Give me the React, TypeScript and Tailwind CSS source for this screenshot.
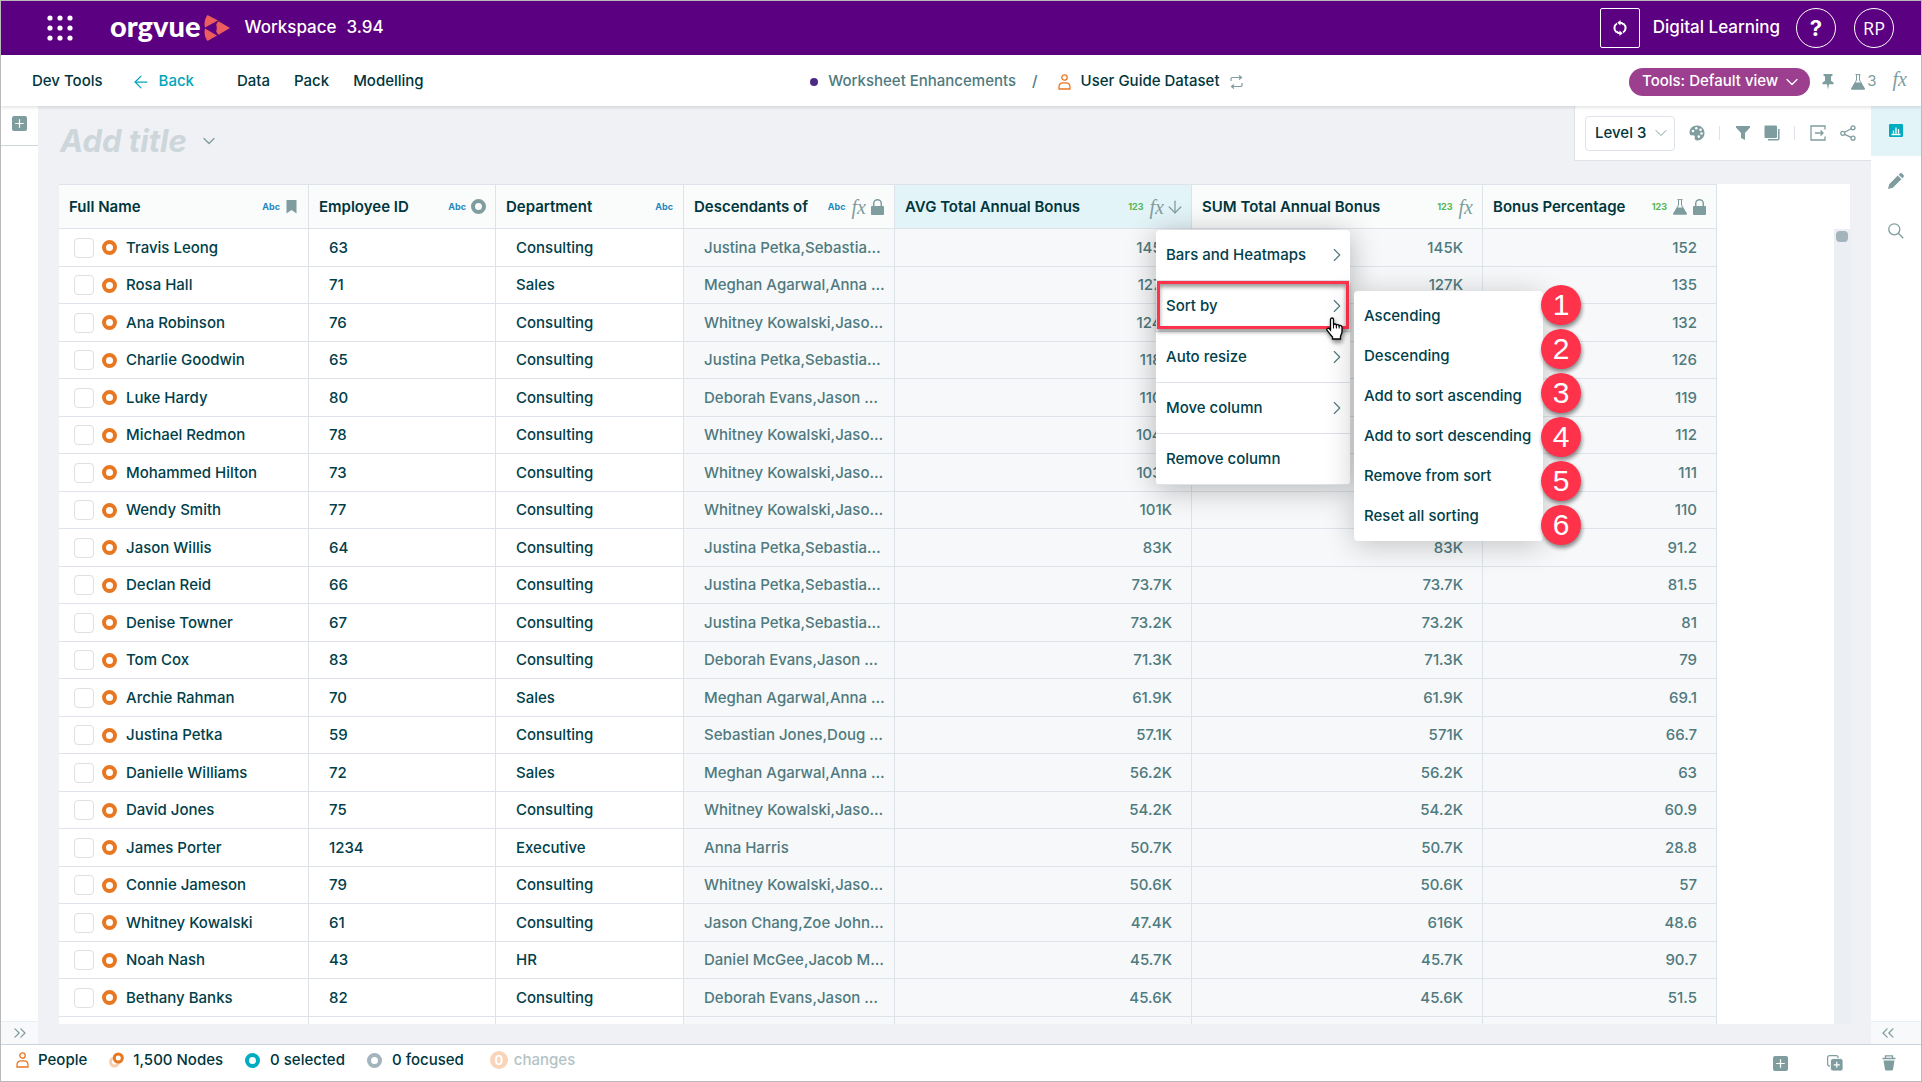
import type { ReactNode } from 'react';
import clsx from 'clsx';
import { ArrowDown, ArrowLeft, ChevronDown, ChevronRight, ChevronsLeft, ChevronsRight } from 'lucide-react';

interface Person {
  name: string;
  id: string;
  department: string;
  descendants: string;
  avg: string;
  sum: string;
  bonus: string;
}

const JUSTINA = 'Justina Petka,Sebastia…';
const MEGHAN = 'Meghan Agarwal,Anna …';
const WHITNEY = 'Whitney Kowalski,Jaso…';
const DEBORAH = 'Deborah Evans,Jason …';

const PEOPLE: Person[] = [
  { name: 'Travis Leong', id: '63', department: 'Consulting', descendants: JUSTINA, avg: '145K', sum: '145K', bonus: '152' },
  { name: 'Rosa Hall', id: '71', department: 'Sales', descendants: MEGHAN, avg: '127K', sum: '127K', bonus: '135' },
  { name: 'Ana Robinson', id: '76', department: 'Consulting', descendants: WHITNEY, avg: '124K', sum: '124K', bonus: '132' },
  { name: 'Charlie Goodwin', id: '65', department: 'Consulting', descendants: JUSTINA, avg: '118K', sum: '118K', bonus: '126' },
  { name: 'Luke Hardy', id: '80', department: 'Consulting', descendants: DEBORAH, avg: '110K', sum: '110K', bonus: '119' },
  { name: 'Michael Redmon', id: '78', department: 'Consulting', descendants: WHITNEY, avg: '104K', sum: '104K', bonus: '112' },
  { name: 'Mohammed Hilton', id: '73', department: 'Consulting', descendants: WHITNEY, avg: '103K', sum: '103K', bonus: '111' },
  { name: 'Wendy Smith', id: '77', department: 'Consulting', descendants: WHITNEY, avg: '101K', sum: '101K', bonus: '110' },
  { name: 'Jason Willis', id: '64', department: 'Consulting', descendants: JUSTINA, avg: '83K', sum: '83K', bonus: '91.2' },
  { name: 'Declan Reid', id: '66', department: 'Consulting', descendants: JUSTINA, avg: '73.7K', sum: '73.7K', bonus: '81.5' },
  { name: 'Denise Towner', id: '67', department: 'Consulting', descendants: JUSTINA, avg: '73.2K', sum: '73.2K', bonus: '81' },
  { name: 'Tom Cox', id: '83', department: 'Consulting', descendants: DEBORAH, avg: '71.3K', sum: '71.3K', bonus: '79' },
  { name: 'Archie Rahman', id: '70', department: 'Sales', descendants: MEGHAN, avg: '61.9K', sum: '61.9K', bonus: '69.1' },
  { name: 'Justina Petka', id: '59', department: 'Consulting', descendants: 'Sebastian Jones,Doug …', avg: '57.1K', sum: '571K', bonus: '66.7' },
  { name: 'Danielle Williams', id: '72', department: 'Sales', descendants: MEGHAN, avg: '56.2K', sum: '56.2K', bonus: '63' },
  { name: 'David Jones', id: '75', department: 'Consulting', descendants: WHITNEY, avg: '54.2K', sum: '54.2K', bonus: '60.9' },
  { name: 'James Porter', id: '1234', department: 'Executive', descendants: 'Anna Harris', avg: '50.7K', sum: '50.7K', bonus: '28.8' },
  { name: 'Connie Jameson', id: '79', department: 'Consulting', descendants: WHITNEY, avg: '50.6K', sum: '50.6K', bonus: '57' },
  { name: 'Whitney Kowalski', id: '61', department: 'Consulting', descendants: 'Jason Chang,Zoe John…', avg: '47.4K', sum: '616K', bonus: '48.6' },
  { name: 'Noah Nash', id: '43', department: 'HR', descendants: 'Daniel McGee,Jacob M…', avg: '45.7K', sum: '45.7K', bonus: '90.7' },
  { name: 'Bethany Banks', id: '82', department: 'Consulting', descendants: DEBORAH, avg: '45.6K', sum: '45.6K', bonus: '51.5' },
];

const SORT_OPTIONS = [
  'Ascending',
  'Descending',
  'Add to sort ascending',
  'Add to sort descending',
  'Remove from sort',
  'Reset all sorting',
];

/* ---------- icons ---------- */

function Logo() {
  return (
    <a href="#" aria-label="orgvue" className="flex items-center text-white">
      <span className="pb-1 font-['Lato',sans-serif] text-[29px] leading-8 font-black">orgvue</span>
      <svg width="26" height="26" viewBox="0 0 26 26" fill="#ec5e5e" className="ml-1" aria-hidden="true">
        <path d="M3.500 0 14 5.600 1 12.400C-.2 8 .9 3.500 3.500 0Z" />
        <path d="M3.500 26 13 20.600 1 13.600c-1.100 4.600-.1 9.100 2.500 12.400Z" />
        <path d="M14.500 6.300 26 13l-11.500 6.700C12.200 17.500 11.500 15 11.500 13s.7-4.500 3-6.700Z" />
        <path d="M2.300 13 9.500 8.700h2.300c1.300 2.600 1.300 6 0 8.600H9.500Z" fill="#5b0080" />
      </svg>
    </a>
  );
}

function AppGrid() {
  return (
    <svg width="26" height="26" viewBox="0 0 26 26" fill="white" aria-hidden="true">
      {[3, 13, 23].map((y) => [3, 13, 23].map((x) => <circle key={`${x}-${y}`} cx={x} cy={y} r="2.600" />))}
    </svg>
  );
}

function SyncIcon() {
  return (
    <svg width="14" height="16" viewBox="0 0 14 16" fill="none" stroke="white" strokeWidth="2" aria-hidden="true">
      <path d="M3.300 12A5.200 5.200 0 0 1 4 3.500" />
      <path d="M10.700 4A5.200 5.200 0 0 1 10 12.500" />
      <path d="M7 2.800a5.200 5.200 0 0 1 3.700 1.700M7 13.200a5.200 5.200 0 0 1-3.700-1.700" />
      <path d="M7.500 0v5.600L4.300 2.800ZM6.500 16v-5.600l3.200 2.800Z" fill="white" stroke="none" />
    </svg>
  );
}

function PersonIcon() {
  return (
    <svg width="13" height="16" viewBox="0 0 13 16" fill="none" stroke="#e87722" strokeWidth="1.300" aria-hidden="true">
      <circle cx="6.500" cy="3.500" r="2.700" />
      <path d="M1 15v-2c0-2.600 1.700-4.200 4-4.200h3c2.300 0 4 1.600 4 4.200v2Z" />
    </svg>
  );
}

function RepeatIcon() {
  return (
    <svg width="13" height="14" viewBox="0 0 13 14" fill="none" stroke="#7f9c9e" strokeWidth="1.200" aria-hidden="true">
      <path d="M1 6V3.800C1 3 1.500 2.500 2.300 2.500H11M9 .5l2.500 2L9 4.500" />
      <path d="M12 8v2.200c0 .8-.5 1.300-1.300 1.300H2M4 9.500l-2.500 2 2.500 2" />
    </svg>
  );
}

function PinIcon() {
  return (
    <svg width="12" height="16" viewBox="0 0 12 16" fill="#7f9c9e" aria-hidden="true">
      <path d="M1.500 0h9v1.500L9 2.500v4.300l2.500 1.700v1.700H7L6 15.500 5 10.200H.5V8.500L3 6.800V2.500L1.500 1.500Z" />
    </svg>
  );
}

function FlaskIcon() {
  return (
    <svg width="14" height="16" viewBox="0 0 14 16" aria-hidden="true">
      <path d="M4.500.6h5M5.500.6V6L1 14.500M8.500.6V6L13 14.500" fill="none" stroke="#7f9c9e" />
      <path d="M4 8.500h6l3.800 5.700c.4.900 0 1.600-1 1.600H1.200c-1 0-1.400-.7-1-1.600Z" fill="#7f9c9e" />
    </svg>
  );
}

function LockIcon() {
  return (
    <svg width="13" height="16" viewBox="0 0 13 16" aria-hidden="true">
      <path d="M2.700 8V4.500a3.800 3.800 0 0 1 7.600 0V8" fill="none" stroke="#7f9c9e" strokeWidth="1.500" />
      <rect y="7" width="13" height="9" rx="1" fill="#7f9c9e" />
    </svg>
  );
}

function BookmarkIcon() {
  return (
    <svg width="11" height="14" viewBox="0 0 11 14" fill="#7f9c9e" className="mr-px" aria-hidden="true">
      <path d="M.5 0h10v13.500L5.500 10 .5 13.500Z" />
    </svg>
  );
}

function PaletteIcon() {
  return (
    <svg width="16" height="16" viewBox="0 0 16 16" aria-hidden="true">
      <path d="M8 .5C3.500.5.500 3.800.500 7.500c0 2 1.200 3.200 3 2.800 1.800-.4 2.700.7 2.200 2.300-.4 1.500.6 2.900 2.300 2.900 4.300 0 7.500-3.400 7.500-7.500S12.300.5 8 .5Z" fill="#7f9c9e" />
      <g fill="white">
        <circle cx="4" cy="6" r="1.300" />
        <circle cx="7.300" cy="3.300" r="1.300" />
        <circle cx="11.500" cy="4.700" r="1.300" />
        <circle cx="12.500" cy="8.500" r="1.300" />
        <circle cx="9.800" cy="11.600" r="1.300" />
      </g>
    </svg>
  );
}

function FilterIcon() {
  return (
    <svg width="14" height="14" viewBox="0 0 14 14" fill="#7f9c9e" aria-hidden="true">
      <path d="M0 0h14v1.500L9 7v7l-4-2V7L0 1.500Z" />
    </svg>
  );
}

function LayersIcon() {
  return (
    <svg width="16" height="16" viewBox="0 0 16 16" aria-hidden="true">
      <rect x=".5" y=".5" width="12.500" height="12.500" rx="1" fill="#7f9c9e" />
      <path d="M14.800 4v9.500c0 .8-.5 1.300-1.300 1.300H4" fill="none" stroke="#7f9c9e" strokeWidth="1.500" />
    </svg>
  );
}

function ExportIcon() {
  return (
    <svg width="16" height="16" viewBox="0 0 16 16" fill="none" stroke="#7f9c9e" strokeWidth="1.300" aria-hidden="true">
      <path d="M15 4.500V1H1v14h14v-3.500M5 8h8M10.500 5.500 13 8l-2.500 2.500" />
    </svg>
  );
}

function ShareIcon() {
  return (
    <svg width="16" height="16" viewBox="0 0 16 16" fill="none" stroke="#7f9c9e" strokeWidth="1.300" aria-hidden="true">
      <circle cx="2.800" cy="8.300" r="2" />
      <circle cx="13" cy="2.800" r="2" />
      <circle cx="13" cy="13.200" r="2" />
      <path d="m4.600 7.300 6.600-3.500M4.600 9.300l6.600 3" />
    </svg>
  );
}

function ChartIcon() {
  return (
    <svg width="14" height="14" viewBox="0 0 14 14" aria-hidden="true">
      <rect width="14" height="13" rx="1" fill="#00acbf" />
      <path d="M2.500 10.500h9M4.500 9.500V6.500M7 9.500v-6M9.500 9.500v-4.500" stroke="white" strokeWidth="1.300" />
    </svg>
  );
}

function PencilIcon() {
  return (
    <svg width="16" height="16" viewBox="0 0 16 16" fill="#7f9c9e" aria-hidden="true">
      <path d="M0 16l1.200-4.800L9.800 2.600l3.600 3.600-8.600 8.600ZM10.700 1.700 12 .5c.6-.6 1.400-.6 2 0l1.500 1.500c.6.6.6 1.400 0 2l-1.200 1.300Z" />
    </svg>
  );
}

function SearchIcon() {
  return (
    <svg width="16" height="16" viewBox="0 0 16 16" fill="none" stroke="#7f9c9e" strokeWidth="1.300" aria-hidden="true">
      <circle cx="6.300" cy="6.300" r="5.500" />
      <path d="m10.300 10.300 5 5" />
    </svg>
  );
}

function PlusBox() {
  return (
    <svg width="15" height="15" viewBox="0 0 15 15" aria-hidden="true">
      <rect width="15" height="15" rx="2" fill="#7f9c9e" />
      <path d="M7.500 3.200v8.600M3.200 7.500h8.600" stroke="white" strokeWidth="1.200" />
    </svg>
  );
}

function CopyPlus() {
  return (
    <svg width="16" height="16" viewBox="0 0 16 16" aria-hidden="true">
      <rect x=".6" y=".6" width="10.500" height="10.500" rx="2" fill="none" stroke="#7f9c9e" strokeWidth="1.200" />
      <rect x="3.500" y="3.500" width="12.500" height="12.500" rx="2.500" fill="#7f9c9e" stroke="white" strokeWidth=".8" />
      <path d="M9.800 6.800v6M6.800 9.800h6" stroke="white" strokeWidth="1.200" />
    </svg>
  );
}

function TrashIcon() {
  return (
    <svg width="14" height="16" viewBox="0 0 14 16" aria-hidden="true">
      <path d="M3.500 3V.8h7V3M.5 3.500h13" fill="none" stroke="#7f9c9e" strokeWidth="1.300" />
      <path d="M1.500 5.500h11L11 14.500c-.1.700-.5 1-1.200 1H4.200c-.7 0-1.100-.3-1.200-1Z" fill="#7f9c9e" />
    </svg>
  );
}

function NodesIcon() {
  return (
    <svg width="15" height="16" viewBox="0 0 15 16" fill="none" strokeWidth="3" aria-hidden="true">
      <circle cx="5.500" cy="10" r="4" stroke="#f8cfae" />
      <circle cx="9.300" cy="6" r="4" stroke="#e87722" fill="white" />
    </svg>
  );
}

function HandCursor() {
  return (
    <svg width="19" height="24" viewBox="0 0 19 24" className="pointer-events-none absolute top-9 right-1.5 z-10 drop-shadow-[1px_3px_2px_rgba(0,0,0,0.45)]" aria-hidden="true">
      <path
        d="M5.500 13V2.500C5.500.5 8.500.5 8.500 2.500V8c.3-1.500 2.800-1.300 2.900.3.600-1.200 2.600-.8 2.800.6.800-.9 2.700-.4 2.800 1.300v4.300c0 2-1 3.300-1.500 4.700V22H7.500v-2C6 18.500 4 16 2 13.200c-.8-1.300.9-2.600 2.200-1.600Z"
        fill="white"
        stroke="black"
        strokeWidth="1.300"
      />
      <path d="M8.500 8v3.500M11.400 8.500v3M14.200 9v2.500" stroke="black" strokeWidth="1" fill="none" />
    </svg>
  );
}

function Fx() {
  return <span className="-mr-px font-['Liberation_Serif',serif] text-[20px] leading-4 font-normal text-[#7f9c9e] italic">fx</span>;
}

function Ring({ className }: { className: string }) {
  return <span className={clsx('inline-block size-[15px] shrink-0 rounded-full border-4', className)} />;
}

const AbcTag = () => <span className="text-[9px] font-bold text-[#1f88c0]">Abc</span>;
const NumTag = () => <span className="text-[9px] font-bold text-[#55b657]">123</span>;

/* ---------- page chrome ---------- */

function TopBar() {
  return (
    <header className="flex h-[54px] shrink-0 items-center bg-[#5b0080] pr-[27px] pl-[46px] text-white">
      <button type="button" aria-label="Applications">
        <AppGrid />
      </button>
      <div className="ml-[37px] flex items-center">
        <Logo />
        <span className="ml-3.5 text-[17px] font-medium">Workspace</span>
        <span className="ml-2.5 text-[17px] font-medium">3.94</span>
      </div>
      <div className="ml-auto flex items-center">
        <button type="button" aria-label="Refresh" className="grid size-10 place-items-center rounded-xs border border-white">
          <SyncIcon />
        </button>
        <span className="ml-[13px] text-[17px] font-medium">Digital Learning</span>
        <button type="button" aria-label="Help" className="ml-4 grid size-10 place-items-center rounded-full border border-white text-[22px] font-bold">
          ?
        </button>
        <button type="button" className="ml-[18px] grid size-10 place-items-center rounded-full border border-white font-['Open_Sans',sans-serif] text-lg">
          RP
        </button>
      </div>
    </header>
  );
}

function NavBar() {
  return (
    <nav className="relative z-10 flex h-[51px] shrink-0 items-center justify-between bg-white pt-0.5 pr-[15px] pl-[31px] text-[15px] font-medium text-[#00363d] shadow-[0_1px_4px_rgba(0,0,0,0.15)]">
      <div className="flex items-center">
        <a href="#">Dev Tools</a>
        <a href="#" className="ml-7 flex items-center gap-2 text-[#00a5bd]">
          <ArrowLeft className="size-5" strokeWidth={1.5} aria-hidden="true" />
          Back
        </a>
        <a href="#" className="ml-[43px]">Data</a>
        <a href="#" className="ml-6">Pack</a>
        <a href="#" className="ml-6">Modelling</a>
      </div>
      <div className="flex items-center">
        <span className="size-2 rounded-full bg-[#4b2a85]" />
        <a href="#" className="ml-2.5 text-[#4f7a7e]">Worksheet Enhancements</a>
        <span className="mx-4 text-[#4f7a7e]">/</span>
        <span className="mr-2.5 ml-1">
          <PersonIcon />
        </span>
        <span>User Guide Dataset</span>
        <button type="button" aria-label="Switch dataset" className="ml-2.5">
          <RepeatIcon />
        </button>
      </div>
      <div className="flex items-center text-[#7f9c9e]">
        <button type="button" className="flex h-7 items-center gap-1 rounded-full bg-[#9c3f8f] pr-2 pl-[13px] text-white">
          Tools: Default view
          <ChevronDown className="size-5" strokeWidth={1.5} aria-hidden="true" />
        </button>
        <button type="button" aria-label="Pin" className="ml-3">
          <PinIcon />
        </button>
        <button type="button" className="ml-[17px] flex items-center gap-0.5 font-normal">
          <FlaskIcon />3
        </button>
        <button type="button" className="ml-4">
          <Fx />
        </button>
      </div>
    </nav>
  );
}

function LeftRail() {
  return (
    <aside className="flex w-[37px] shrink-0 flex-col bg-white">
      <div className="flex h-10 items-center justify-center border-b border-[#cfd6da] pb-1">
        <button type="button" aria-label="Add sheet">
          <PlusBox />
        </button>
      </div>
      <button type="button" aria-label="Expand left panel" className="mt-auto flex h-[23px] items-center justify-center border-t border-[#eceff2] bg-[#f8f9fb] text-[#7f9c9e]">
        <ChevronsRight className="size-5" strokeWidth={1.5} />
      </button>
    </aside>
  );
}

function RightRail() {
  return (
    <aside className="flex w-[50px] shrink-0 flex-col bg-white">
      <button type="button" aria-label="Charts" className="grid h-[50px] place-items-center bg-[#e3f4f8]">
        <ChartIcon />
      </button>
      <button type="button" aria-label="Edit" className="grid h-[50px] place-items-center">
        <PencilIcon />
      </button>
      <button type="button" aria-label="Search" className="grid h-[50px] place-items-center">
        <SearchIcon />
      </button>
      <button type="button" aria-label="Expand right panel" className="mt-auto flex h-[23px] items-center border-t border-[#eceff2] bg-[#f8f9fb] pl-[7px] text-[#7f9c9e]">
        <ChevronsLeft className="size-5" strokeWidth={1.5} />
      </button>
    </aside>
  );
}

function SheetToolbar() {
  return (
    <div className="flex h-[78px] shrink-0 items-start justify-between">
      <div className="flex h-[70px] items-center pl-[22px]">
        <input
          type="text"
          aria-label="Sheet title"
          placeholder="Add title"
          className="w-[139px] bg-transparent text-[31px] font-bold italic outline-none placeholder:text-[#cdd6da]"
        />
        <button type="button" aria-label="Sheet options">
          <ChevronDown className="size-5 text-[#7f9c9e]" strokeWidth={1.5} />
        </button>
      </div>
      <div className="flex h-[55px] items-center border-b border-l border-[#dde3e9] bg-white pr-[15px] pl-2.5">
        <div className="relative flex items-center">
          <select aria-label="Level" className="h-[35px] w-[90px] appearance-none rounded border border-[#dde3e9] bg-white pl-[9px] text-[15px] font-medium text-[#00363d]">
            <option>Level 3</option>
          </select>
          <ChevronDown className="pointer-events-none absolute right-1 size-5 text-[#7f9c9e]" strokeWidth={1.2} />
        </div>
        <button type="button" aria-label="Colours" className="ml-3.5">
          <PaletteIcon />
        </button>
        <span className="mr-4 ml-3.5 h-3.5 w-px bg-[#dde3e9]" />
        <button type="button" aria-label="Filter">
          <FilterIcon />
        </button>
        <button type="button" aria-label="Layers" className="ml-3.5">
          <LayersIcon />
        </button>
        <span className="mr-[15px] ml-3.5 h-3.5 w-px bg-[#dde3e9]" />
        <button type="button" aria-label="Export">
          <ExportIcon />
        </button>
        <button type="button" aria-label="Share" className="ml-3.5">
          <ShareIcon />
        </button>
      </div>
    </div>
  );
}

/* ---------- menus ---------- */

function MenuItem({ label, submenu = true }: { label: string; submenu?: boolean }) {
  return (
    <button type="button" role="menuitem" className="flex h-[51px] w-full items-center justify-between border-b border-[#dde3e9] pr-0.5 pl-2.5 last:border-b-0">
      {label}
      {submenu && <ChevronRight className="size-[22px] text-[#4f7a7e]" strokeWidth={1.2} aria-hidden="true" />}
    </button>
  );
}

function SortMenu() {
  return (
    <div role="menu" className="absolute top-[61px] left-[198px] w-[189px] rounded bg-white py-[5px] shadow-[0_4px_30px_rgba(0,0,0,0.22)]">
      {SORT_OPTIONS.map((label) => (
        <button key={label} type="button" role="menuitem" className="flex h-10 w-full items-center pl-2.5 whitespace-nowrap">
          {label}
        </button>
      ))}
      <ol className="absolute -top-1.5 left-[187px] flex flex-col gap-1">
        {SORT_OPTIONS.map((label, i) => (
          <li
            key={label}
            className="grid size-10 place-items-center rounded-full bg-[#ff324b] font-['Liberation_Sans',sans-serif] text-[30px] leading-10 font-normal text-white shadow-[1px_3px_4px_rgba(0,0,0,0.45)]"
          >
            {i + 1}
          </li>
        ))}
      </ol>
    </div>
  );
}

function ColumnMenu() {
  return (
    <div role="menu" className="absolute top-[45px] left-[261px] z-20 w-[194px] rounded bg-white text-[15px] font-medium text-[#00404a] shadow-[0_4px_30px_rgba(0,0,0,0.28)]">
      <MenuItem label="Bars and Heatmaps" />
      <div className="relative">
        <MenuItem label="Sort by" />
        <span className="pointer-events-none absolute inset-x-px top-0 bottom-[3px] border-3 border-[#ff324b] shadow-[0_3px_4px_rgba(0,0,0,0.4),inset_0_3px_4px_rgba(0,0,0,0.4)]" />
        <HandCursor />
      </div>
      <MenuItem label="Auto resize" />
      <MenuItem label="Move column" />
      <MenuItem label="Remove column" submenu={false} />
      <SortMenu />
    </div>
  );
}

/* ---------- grid ---------- */

interface HeaderCellProps {
  title: string;
  icons: ReactNode;
  active?: boolean;
  children?: ReactNode;
}

function HeaderCell({ title, icons, active, children }: HeaderCellProps) {
  return (
    <th
      scope="col"
      className={clsx(
        'relative h-[45px] border-y border-r border-[#dde3e9] p-0 text-left font-semibold text-[#00363d]',
        active ? 'bg-[#e3f4f8]' : 'bg-[#fafcfb]',
      )}
    >
      <div className="flex items-center justify-between px-2.5">
        <span>{title}</span>
        <span className="flex items-center gap-1.5">{icons}</span>
      </div>
      {children}
    </th>
  );
}

function Cell({ computed, numeric, children }: { computed?: boolean; numeric?: boolean; children?: ReactNode }) {
  return (
    <td
      className={clsx(
        'border-r border-b border-[#dde3e9] py-0 pr-[19px] pl-5 whitespace-nowrap',
        computed ? 'bg-[#f6f8fa] text-[#4f7a7e]' : 'text-[#00404a]',
        numeric && 'text-right',
      )}
    >
      {children}
    </td>
  );
}

function PersonRow({ person }: { person: Person }) {
  return (
    <tr className="h-[37px] odd:h-[38px]">
      <td className="border-r border-b border-[#dde3e9] p-0 pl-[15px] text-[#00404a]">
        <label className="flex items-center">
          <input type="checkbox" className="size-5 appearance-none rounded border border-[#dde0e4] bg-white" />
          <Ring className="mr-[9px] ml-2 border-[#e87722]" />
          {person.name}
        </label>
      </td>
      <Cell>{person.id}</Cell>
      <Cell>{person.department}</Cell>
      <Cell computed>{person.descendants}</Cell>
      <Cell computed numeric>{person.avg}</Cell>
      <Cell computed numeric>{person.sum}</Cell>
      <Cell computed numeric>{person.bonus}</Cell>
    </tr>
  );
}

function DataGrid() {
  return (
    <div className="mr-[21px] mb-5 ml-[21px] flex min-h-0 flex-1 justify-between overflow-hidden bg-white">
      <table className="w-[1658px] shrink-0 table-fixed border-separate border-spacing-0 self-start text-[15px] leading-5 font-medium">
        <colgroup>
          <col className="w-[250px]" />
          <col className="w-[187px]" />
          <col className="w-[188px]" />
          <col className="w-[211px]" />
          <col className="w-[297px]" />
          <col className="w-[291px]" />
          <col className="w-[234px]" />
        </colgroup>
        <thead>
          <tr>
            <HeaderCell title="Full Name" icons={<><AbcTag /><BookmarkIcon /></>} />
            <HeaderCell title="Employee ID" icons={<><AbcTag /><Ring className="-mx-px border-[#7f9c9e]" /></>} />
            <HeaderCell title="Department" icons={<AbcTag />} />
            <HeaderCell title="Descendants of" icons={<><AbcTag /><Fx /><LockIcon /></>} />
            <HeaderCell
              title="AVG Total Annual Bonus"
              active
              icons={<><NumTag /><Fx /><ArrowDown className="-mr-1 -ml-1 size-5 text-[#7f9c9e]" strokeWidth={1.5} /></>}
            >
              <ColumnMenu />
            </HeaderCell>
            <HeaderCell title="SUM Total Annual Bonus" icons={<><NumTag /><Fx /></>} />
            <HeaderCell title="Bonus Percentage" icons={<><NumTag /><FlaskIcon /><LockIcon /></>} />
          </tr>
        </thead>
        <tbody>
          {PEOPLE.map((person) => (
            <PersonRow key={person.name} person={person} />
          ))}
          <tr className="h-[37px]">
            <Cell />
            <Cell />
            <Cell />
            <Cell computed />
            <Cell computed />
            <Cell computed />
            <Cell computed />
          </tr>
        </tbody>
      </table>
      <div className="mt-[45px] w-4 shrink-0 bg-[#ebeef2] px-0.5 pt-0.5">
        <div className="h-[11px] rounded bg-[#a3b4bd]" />
      </div>
    </div>
  );
}

function StatusBar() {
  return (
    <footer className="flex h-[37px] shrink-0 items-center justify-between border-t border-[#cbd5dd] bg-white pr-[25px] pl-[15px] text-[15px] font-medium text-[#00363d]">
      <div className="flex items-center pb-1.5">
        <PersonIcon />
        <span className="ml-[9px]">People</span>
        <span className="mr-[9px] ml-[22px]">
          <NodesIcon />
        </span>
        <span>1,500 Nodes</span>
        <Ring className="mr-2.5 ml-[22px] border-[#00acbf]" />
        <span>0 selected</span>
        <Ring className="mr-2.5 ml-[22px] border-[#a3b4bd]" />
        <span>0 focused</span>
        <span className="mr-1.5 ml-[26px] grid size-[18px] place-items-center rounded-full bg-[#f9d4b8] text-[13px] font-bold text-white">0</span>
        <span className="text-[#b3c3c5]">changes</span>
      </div>
      <div className="flex items-center gap-[39px]">
        <button type="button" aria-label="Add node">
          <PlusBox />
        </button>
        <button type="button" aria-label="Duplicate node">
          <CopyPlus />
        </button>
        <button type="button" aria-label="Delete node">
          <TrashIcon />
        </button>
      </div>
    </footer>
  );
}

export default function App() {
  return (
    <div className="flex h-screen flex-col overflow-hidden border border-[#b9b9b9] bg-[#f0f1f5] font-['Inter',sans-serif]">
      <TopBar />
      <NavBar />
      <div className="flex min-h-0 flex-1">
        <LeftRail />
        <main className="flex min-w-0 flex-1 flex-col">
          <SheetToolbar />
          <DataGrid />
        </main>
        <RightRail />
      </div>
      <StatusBar />
    </div>
  );
}
